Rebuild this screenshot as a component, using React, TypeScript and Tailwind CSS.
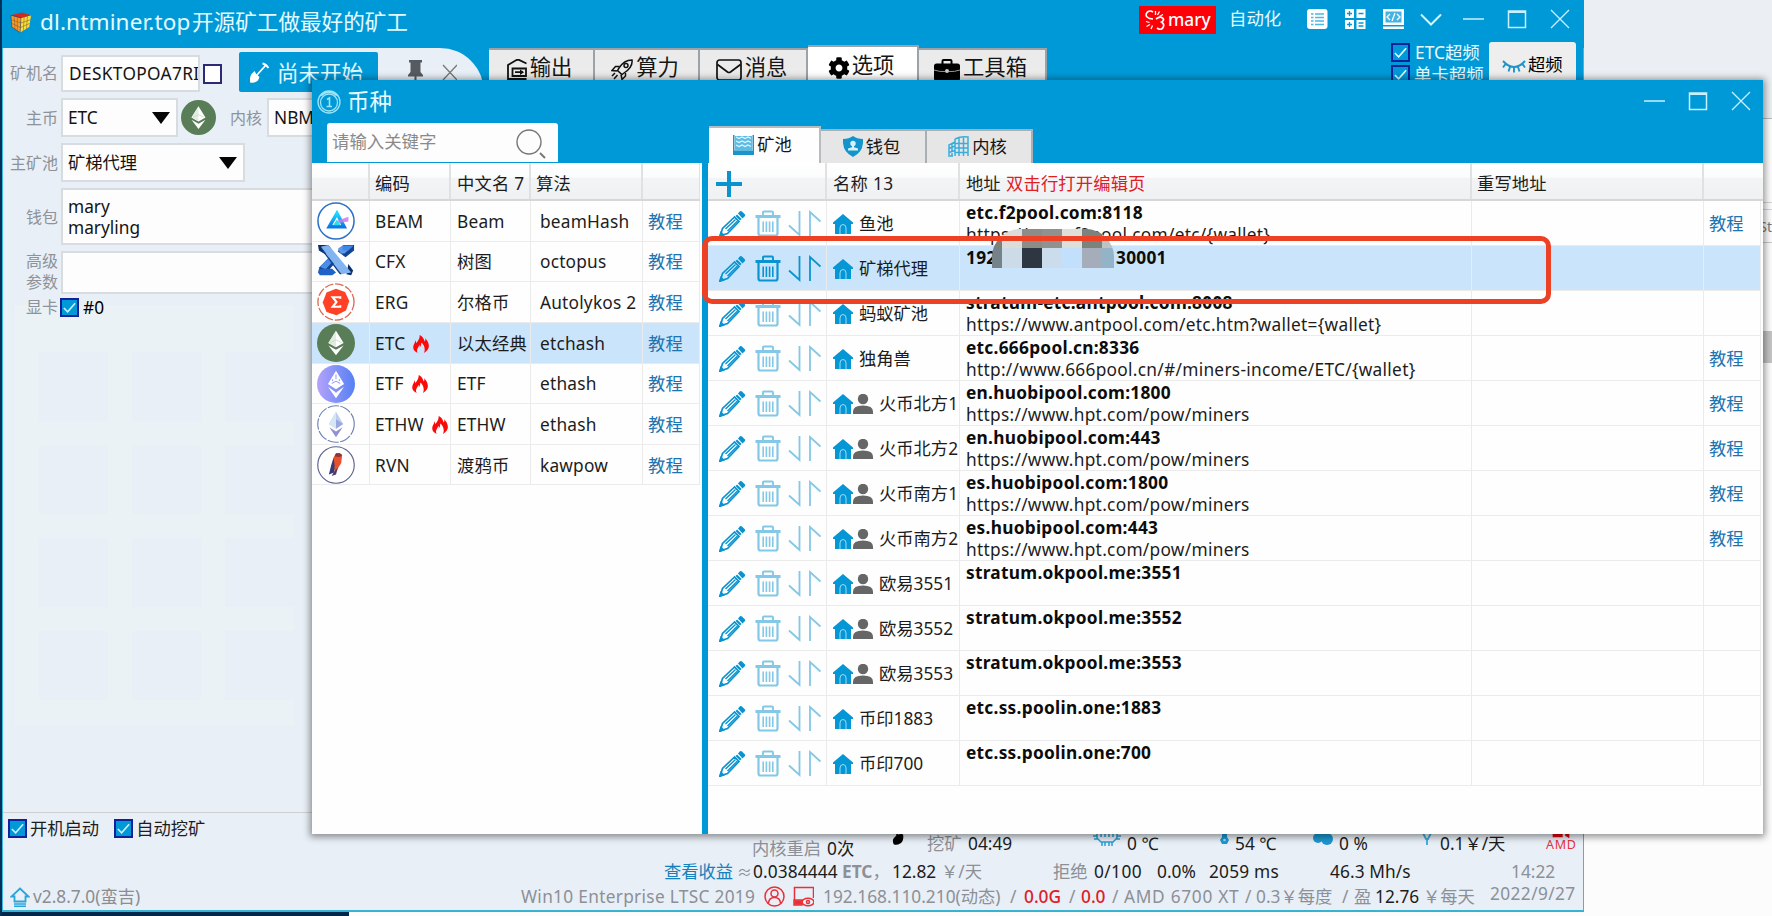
import type { ReactNode } from "react";
import { ImFire } from "react-icons/im";
import { FaCog } from "react-icons/fa";
import { clsx } from "clsx";

/* ---------- small icons ---------- */

const Check = ({ white = false }: { white?: boolean }) => (
  <span className="flex h-[19px] w-[19px] shrink-0 items-center justify-center border-2 border-[#10229a] bg-[#0099d8]">
    <svg viewBox="0 0 16 16" className="h-[15px] w-[15px]" fill="none" stroke={white ? "#e6fbff" : "#c9f2ff"} strokeWidth="1.7">
      <path d="M2 8.5 6 12.5 14 3.5" />
    </svg>
  </span>
);

const EthMark = () => (
  <>
    <path d="M20 7 28 20 20 24.5 12 20z" fill="#fff" />
    <path d="M20 7 20 24.5 12 20z" fill="#e3ece0" />
    <path d="M12 22.5 20 27 28 22.5 20 33z" fill="#fff" />
    <path d="M14 19.5 20 16.8 26 19.5" fill="none" stroke="#c5d6c2" strokeWidth=".8" />
  </>
);

const coins: Record<string, ReactNode> = {
  BEAM: (
    <>
      <defs>
        <linearGradient id="beam" x1="0" y1="0" x2="0" y2="1">
          <stop offset="0" stopColor="#20d8ff" />
          <stop offset="1" stopColor="#0878ea" />
        </linearGradient>
      </defs>
      <circle cx="20" cy="20" r="19" fill="#fff" stroke="#2a6fc8" strokeWidth="1.6" />
      <path d="M21 12 28.500 26H13z" fill="none" stroke="url(#beam)" strokeWidth="3.8" />
      <path d="M22 19.500 33 15.500v5L23 22z" fill="#c77be8" opacity=".85" />
      <path d="M17 24.500 21 18.5 25 24.500z" fill="#2be0e6" />
    </>
  ),
  CFX: (
    <>
      <path d="M24 5 28 2H39V8L30 15 22 9z" fill="#12448f" />
      <path d="M22 6 27 3H38L29 11 25 11z" fill="#5c9ae8" />
      <path d="M27 3 38 3 33 8 27 8z" fill="#3f87ee" />
      <path d="M2 26 14 14 20 20 12 29H3z" fill="#12448f" />
      <path d="M3 25 13 15 17 19 9 28z" fill="#4b8ee8" />
      <path d="M2 27H16L20 31 16 34H3L1 31z" fill="#1d62c9" />
      <path d="M1 2H12L15 6 9 12 2 8z" fill="#0c2f6a" />
      <path d="M33 22 38 29 36 34 31 33z" fill="#0c2f6a" />
      <path d="M4 4 12 2 36 31 26 33z" fill="#82b4f2" />
      <path d="M4 4 6 9 24 33 26 33z" fill="#12448f" />
    </>
  ),
  ERG: (
    <>
      <circle cx="20" cy="20" r="19" fill="#fff" stroke="#dd6a55" strokeWidth="1.4" strokeDasharray="9 2" />
      <path d="M20 6 29.500 9.500 34 19 30.500 29 20.500 34 10 30.500 6 20.500 10 10z" fill="#ff4226" />
      <path d="M24.500 16.500V15H16.500L20.500 20 16.500 25H24.500V23.500" fill="none" stroke="#fff" strokeWidth="2.200" />
    </>
  ),
  ETC: (
    <>
      <circle cx="20" cy="20" r="20" fill="#597d57" />
      <EthMark />
    </>
  ),
  ETF: (
    <>
      <defs>
        <linearGradient id="etf" x1="0" y1="0" x2="1" y2="0">
          <stop offset="0" stopColor="#b4a3fb" />
          <stop offset="1" stopColor="#5580f4" />
        </linearGradient>
      </defs>
      <circle cx="20" cy="20" r="20" fill="url(#etf)" />
      <path d="M20 6 28.500 20 20 25.500 11.500 20z" fill="#fff" />
      <path d="M11.500 23 20 29 28.500 23 20 35z" fill="#fff" />
      <path d="M20 10v5M15.500 19.500 20 17l4.500 2.500M20 26v3M16.500 15v2M23.500 15v2" fill="none" stroke="#8f92f8" strokeWidth="1" />
    </>
  ),
  ETHW: (
    <>
      <circle cx="20" cy="20" r="19.200" fill="#fff" stroke="#6c83b4" strokeWidth="1.200" strokeDasharray="12 1.500" />
      <path d="M20 7 27.500 20 20 25 12.500 20z" fill="#bccdf0" />
      <path d="M20 7 20 25 12.500 20z" fill="#d6e7f4" />
      <path d="M20 15 27.500 20 20 25z" fill="#9aa7e2" />
      <path d="M13 23.500 20 28 27 23.500 20 34z" fill="#8f90d6" />
    </>
  ),
  RVN: (
    <>
      <circle cx="20" cy="20" r="19.200" fill="#fff" stroke="#5c6190" strokeWidth="1.200" />
      <path d="M17.500 12 20 7.500 24 7.500 26.500 9.500 25.500 18 20.500 26 15.500 25z" fill="#e8512c" />
      <path d="M17.500 12 15 20 12.500 30 18 28 18.500 20z" fill="#363a78" />
      <path d="M18.500 26 15.500 31.500 20 30 22 23z" fill="#4f3a6a" />
      <path d="M20 7.500 24 7.500 26.500 9.500 24 11.500 18.500 11z" fill="#8c3340" />
    </>
  ),
};

const Coin = ({ name }: { name: string }) => (
  <svg viewBox="0 0 40 40" className="h-[38px] w-[38px]">{coins[name]}</svg>
);

const Pencil = () => (
  <svg viewBox="0 0 27 27" className="h-[27px] w-[27px]" fill="none" stroke="#0a93cf" strokeWidth="1.700">
    <path d="M19 3.500 21 1.300Q22 .6 23 1.500L26 4.500Q26.500 5.500 25.700 6.300L23.500 8.500z" fill="#0a93cf" stroke="none" />
    <path d="M17.300 5.200 21.800 9.700" strokeWidth="2.200" />
    <path d="M15.500 7 3.500 18.500 1.300 25.700 8.500 23.500 20 11.500z" />
    <path d="M6.500 19 16.500 9.500M8.500 21 18.500 11" strokeWidth="1.400" />
    <path d="M.8 26.300 2 22.500 4.500 25z" fill="#0a93cf" />
  </svg>
);

const Trash = () => (
  <svg viewBox="0 0 26 27" className="h-[27px] w-[26px]" fill="none" stroke="#0a93cf">
    <path d="M.5 6.500H25.500" strokeWidth="3" />
    <path d="M8 5V2.500Q8 1.500 9 1.500H17Q18 1.500 18 2.500V5" strokeWidth="1.900" />
    <path d="M3.500 8V23.500Q3.500 25.500 5.500 25.500H20.500Q22.500 25.500 22.500 23.500V8" strokeWidth="2.200" />
    <path d="M8.200 11.500V22M11.400 11.500V22M14.600 11.500V22M17.800 11.500V22" strokeWidth="1.600" />
  </svg>
);

const Arrows = () => (
  <svg viewBox="0 0 33 27" className="h-[27px] w-[33px]" fill="none" stroke="#0a93cf" strokeWidth="1.800">
    <path d="M11.500 1V25L1 15.500" />
    <path d="M22 26V2L32.500 11.500" />
  </svg>
);

const House = () => (
  <svg viewBox="0 0 20 20" className="h-[20px] w-[20px]">
    <path d="M10 0 20 8.500V10H18V20H2V10H0V8.500z" fill="#0596d5" />
    <path d="M7 20V14Q7 10.500 10 10.500T13 14V20" fill="none" stroke="#9bdcf5" strokeWidth="1" />
  </svg>
);

const User = () => (
  <svg viewBox="0 0 20 20" className="h-[20px] w-[20px]" fill="#666">
    <circle cx="10" cy="5" r="5.200" />
    <path d="M0 20V17.500Q0 11.500 10 11.500T20 17.500V20z" />
  </svg>
);

const Cube = () => (
  <svg viewBox="0 0 24 24" className="h-[23px] w-[22px]">
    <path d="M1 4 12 7 11 23 2 17z" fill="#f59a2c" />
    <path d="M12 7 23 4 21 17 11 23z" fill="#f7e03a" />
    <path d="M1 4 13 1 23 4 12 7z" fill="#d42a1c" />
    <path d="M4.500 5 5.500 19M8 6 8 21M1.500 9 12 12.500M2 13 11.500 17.500M15.500 6 14.500 21M19 5 18 19M12 12.500 22.500 9M11.500 17.500 21.500 13" stroke="#8a5a28" strokeWidth=".6" />
    <path d="M1 4 12 7 11 23 2 17z" fill="none" stroke="#3c2c50" strokeWidth=".6" />
  </svg>
);

const WindowButtons = () => (
  <svg viewBox="0 0 107 20" className="h-[20px] w-[107px]" fill="none" stroke="#c8f1fd" strokeWidth="1.500">
    <path d="M0 10H21" />
    <path d="M45.500 2H62.500V18.500H45.500z" />
    <path d="M45 3H63" strokeWidth="2" />
    <path d="M88 1 106 19M106 1 88 19" strokeWidth="1.300" />
  </svg>
);

/* ---------- data ---------- */

const coinRows = [
  { code: "BEAM", name: "Beam", algo: "beamHash" },
  { code: "CFX", name: "树图", algo: "octopus" },
  { code: "ERG", name: "尔格币", algo: "Autolykos 2" },
  { code: "ETC", name: "以太经典", algo: "etchash", hot: true, active: true },
  { code: "ETF", name: "ETF", algo: "ethash", hot: true },
  { code: "ETHW", name: "ETHW", algo: "ethash", hot: true },
  { code: "RVN", name: "渡鸦币", algo: "kawpow" },
];

const poolRows = [
  { name: "鱼池", host: "etc.f2pool.com:8118", url: "https://www.f2pool.com/etc/{wallet}", help: true },
  { name: "矿梯代理", host: "192", port: "30001", active: true },
  { name: "蚂蚁矿池", host: "stratum-etc.antpool.com:8008", url: "https://www.antpool.com/etc.htm?wallet={wallet}" },
  { name: "独角兽", host: "etc.666pool.cn:8336", url: "http://www.666pool.cn/#/miners-income/ETC/{wallet}", help: true },
  { name: "火币北方1", user: true, host: "en.huobipool.com:1800", url: "https://www.hpt.com/pow/miners", help: true },
  { name: "火币北方2", user: true, host: "en.huobipool.com:443", url: "https://www.hpt.com/pow/miners", help: true },
  { name: "火币南方1", user: true, host: "es.huobipool.com:1800", url: "https://www.hpt.com/pow/miners", help: true },
  { name: "火币南方2", user: true, host: "es.huobipool.com:443", url: "https://www.hpt.com/pow/miners", help: true },
  { name: "欧易3551", user: true, host: "stratum.okpool.me:3551" },
  { name: "欧易3552", user: true, host: "stratum.okpool.me:3552" },
  { name: "欧易3553", user: true, host: "stratum.okpool.me:3553" },
  { name: "币印1883", host: "etc.ss.poolin.one:1883" },
  { name: "币印700", host: "etc.ss.poolin.one:700" },
];

const headGradient = "bg-[linear-gradient(#ffffff_0%,#fbfcfc_40%,#f3f4f6_41%,#eff1f3_100%)]";

/* ---------- main window ---------- */

const TopBar = () => (
  <div className="flex h-[42px] items-start text-[#e6fbff]">
    <div className="flex items-center pt-[7px] pl-[8px]">
      <Cube />
      <span className="ml-[8px] w-[152px] text-[22.500px] leading-[30px] whitespace-nowrap tracking-[0.15px]">dl.ntminer.top</span>
      <span className="text-[21.600px] leading-[30px]">开源矿工做最好的矿工</span>
    </div>
    <div className="ml-auto flex items-center">
      <div className="mt-[6px] mr-[13px] flex h-[28px] w-[77px] items-center bg-[#fb0007] pl-[6px]">
        <svg viewBox="0 0 20 20" className="h-[20px] w-[20px]" fill="none" stroke="#fff" strokeWidth="1.700">
          <path d="M8 9Q4 9 2 7T2.500 2Q5 0 8 2" />
          <path d="M11 9Q15 6 17.500 8T16.500 12Q20 14 18 17.500T12 18" />
          <path d="M10.500 1v4M14.500 1.500l-2 3.500M18 4.500l-3.500 2M1 11.500l3.500 1M1.500 16.500l3.500-2M6 19l1.500-3.500" strokeWidth="1.300" />
        </svg>
        <span className="ml-[3px] text-[17.300px] leading-[24px] font-medium text-white">mary</span>
      </div>
      <span className="mt-[2px] w-[78px] text-[17.400px] leading-[24px]">自动化</span>
      <svg viewBox="0 0 97 20" className="mt-[4px] h-[20px] w-[97px]" fill="#fff">
        <rect x="0" y="0" width="20.500" height="20" rx="3" />
        <path d="M4 5h2.500M8 5h9M4 8.500h2.500M8 8.500h9M4 12h2.500M8 12h9M4 15.500h2.500M8 15.500h9" stroke="#4bb8e4" strokeWidth="1.300" />
        <path d="M38 0h9v9h-9zM49.500 0h9v9h-9zM38 11h9v9h-9zM49.500 11h9v9h-9z" />
        <path d="M40 4.500h5M42.500 2v5M51.500 4.500h5M40 15.500h5M42.500 13v5M51.500 14h5M51.500 17h5" stroke="#0099d8" strokeWidth="1.300" />
        <path d="M76 0h21v16H76zM76 17.500h21V20H76z" />
        <path d="M78.500 2.500h16v11h-16z" fill="#42b3e2" />
        <path d="M83 5l-3 3 3 3M90 5l3 3-3 3M88 4l-3 8" fill="none" stroke="#fff" strokeWidth="1.300" />
      </svg>
      <svg viewBox="0 0 22 12" className="mt-[4px] mr-[21px] ml-[16px] h-[13px] w-[22px]" fill="none" stroke="#d5f6ff" strokeWidth="2">
        <path d="M1 1 11 11 21 1" />
      </svg>
      <div className="mt-[4px] mr-[14px]"><WindowButtons /></div>
    </div>
  </div>
);

const MainTab = ({ icon, label, width, active }: { icon: ReactNode; label: string; width: string; active?: boolean }) => (
  <div
    className={clsx(
      "flex shrink-0 justify-center border-t-2 border-r-2 border-[#9ba3a8] pr-[3px] text-[21.300px] leading-[26px] text-[#151515]",
      width,
      active ? "mt-[5px] h-[40px] bg-white pt-[5px]" : "mt-[8px] h-[40px] bg-[#ebebeb] pt-[4px]",
    )}
  >
    <span className="mt-[5px] flex h-[21px] items-center">{icon}</span>
    <span className={active ? "ml-[2px]" : "ml-[3px]"}>{label}</span>
  </div>
);

const MainTabs = () => (
  <div className="flex h-[46px]">
    <MainTab width="w-[106px]" label="输出" icon={
      <svg viewBox="0 0 20 21" className="h-[21px] w-[20px]" fill="none" stroke="#111" strokeWidth="1.800">
        <path d="M19.500 4.500 12 .9Q10.500.5 9 1.200L1 6V20H19.500" />
        <path d="M5.500 9.500H19V17H5.500zM8 13.200H16" />
        <path d="M13 10.500 17 13.200 13 16z" fill="#111" stroke="none" />
      </svg>} />
    <MainTab width="w-[105px]" label="算力" icon={
      <svg viewBox="0 0 22 21" className="h-[21px] w-[22px]" fill="none" stroke="#111" strokeWidth="1.500">
        <path d="M8 9Q13 1 21 1Q22 8 13 14L11 15.500 6.500 11.500z" />
        <path d="M8.500 7.500H4.500L1 11.500 6 12M14.500 14V17L11 20.500 10 15.500M4 14 1 17M6.500 16 3 20" />
        <circle cx="15" cy="6.500" r="2" />
      </svg>} />
    <MainTab width="w-[108px]" label="消息" icon={
      <svg viewBox="0 0 26 22" className="h-[22px] w-[26px]" fill="none" stroke="#111" strokeWidth="1.700">
        <rect x="1" y="1" width="24" height="20" rx="2.500" />
        <path d="M1.500 5.500 11.500 13Q13 14 14.500 13L24.500 5.500" />
      </svg>} />
    <MainTab width="w-[111px]" label="选项" active icon={<FaCog className="h-[22px] w-[22px] text-black" />} />
    <MainTab width="w-[128px]" label="工具箱" icon={
      <svg viewBox="0 0 26 22" className="h-[22px] w-[26px]">
        <path d="M8.500 5V2Q8.500 1 9.500 1H16.500Q17.500 1 17.500 2V5" fill="none" stroke="#000" strokeWidth="2" />
        <rect x="0" y="4.500" width="26" height="17.500" rx="2.500" />
        <path d="M0 11Q6 13 11 12.500M15 12.500Q20 13 26 11" stroke="#999" fill="none" />
        <circle cx="13" cy="12" r="2" fill="#ccc" />
      </svg>} />
  </div>
);

const Label = ({ children, pad = "pt-[8px]" }: { children: ReactNode; pad?: string }) => (
  <span className={clsx("w-[55px] shrink-0 text-right text-[16px] leading-[21px] text-[#8d9399]", pad)}>{children}</span>
);

const Field = ({ className, children }: { className: string; children?: ReactNode }) => (
  <div className={clsx("ml-[3px] flex shrink-0 items-center overflow-hidden border-2 border-[#d9dcdf] bg-[#fdfdfd] pr-[6px] pl-[5px] text-[17.300px] leading-[21px] whitespace-nowrap text-[#141414]", className)}>
    {children}
  </div>
);

const Caret = () => (
  <svg viewBox="0 0 18 12" className="ml-auto h-[12px] w-[18px]"><path d="M0 0H18L9 12z" fill="#050505" /></svg>
);

const Sidebar = () => (
  <div className="relative flex w-[482px] shrink-0 flex-col overflow-hidden rounded-tr-[44px] border-l border-[#3cb9dc] bg-[#e8eff6]">
    {/* faint tiled watermark */}
    <div className="absolute top-[257px] left-[12px] grid h-[420px] w-[279px] grid-cols-3 content-start gap-[24px] bg-[#eaf2f6] pt-[47px] pl-[24px]">
      {Array.from({ length: 12 }, (_, i) => <div key={i} className="h-[69px] bg-[#e8eff6]" />)}
    </div>
    <div className="relative flex flex-col gap-[6px] pt-[7px]">
      <div className="flex h-[37px]">
        <Label>矿机名</Label>
        <Field className="w-[139px]"><span className="ml-[1px] tracking-[0.35px]">DESKTOPOA7RI</span></Field>
        <span className="mt-[9px] ml-[3px] h-[20px] w-[19px] shrink-0 border-2 border-[#2c2a78] bg-white" />
        <div className="-mt-[3px] ml-[17px] flex h-[40px] w-[139px] shrink-0 items-center rounded-[2px] bg-[#0099d8] pt-[1px] pl-[11px] text-[#e6fbff]">
          <svg viewBox="0 0 20 21" className="h-[21px] w-[20px]" fill="#fff">
            <path d="M1.500 12 4.500 9 6.500 12.500 9.500 15 8 18.500Q5 21.500 0 20.500Q-.5 15 1.500 12z" />
            <path d="M6.500 13.500 15.500 3.500M12.500 1.500Q16 2 18.500 6" stroke="#fff" strokeWidth="1.800" fill="none" />
          </svg>
          <span className="ml-[7px] text-[21.500px] leading-[26px]">尚未开始</span>
        </div>
        <svg viewBox="0 0 50 22" className="mt-[5px] ml-[29px] h-[22px] w-[50px] shrink-0">
          <path d="M2 0H15V2.500H13.500V12L16 15V16.500H1V15L3.500 12V2.500H2zM7.500 16H9.500V22H7.500z" fill="#555b60" />
          <path d="M36 5 50 20M50 5 36 20" stroke="#777" strokeWidth="1.300" />
        </svg>
      </div>
      <div className="flex h-[39px]">
        <Label pad="pt-[10px]">主币</Label>
        <Field className="w-[117px]">ETC<Caret /></Field>
        <span className="mt-[2px] ml-[3px] shrink-0"><svg viewBox="0 0 40 40" className="h-[35px] w-[35px]">{coins.ETC}</svg></span>
        <span className="mt-[10px] ml-[14px] w-[34px] shrink-0 text-[16px] leading-[21px] text-[#8d9399]">内核</span>
        <Field className="-ml-[1px] w-[200px]">NBMiner</Field>
      </div>
      <div className="flex h-[39px]">
        <Label pad="pt-[10px]">主矿池</Label>
        <Field className="w-[184px]">矿梯代理<Caret /></Field>
      </div>
      <div className="flex h-[57px]">
        <Label pad="pt-[19px]">钱包</Label>
        <Field className="w-[420px]"><span className="pt-[1px]">mary<br />maryling</span></Field>
      </div>
      <div className="flex h-[43px]">
        <Label pad="pt-0">高级<br />参数</Label>
        <Field className="w-[420px]" />
      </div>
      <div className="-mt-[3px] flex h-[20px]">
        <Label pad="pt-0">显卡</Label>
        <span className="mr-[4px] ml-[2px] pt-[1px]"><Check /></span>
        <span className="pt-[1px] text-[17.300px] leading-[20px]">#0</span>
      </div>
    </div>
    <div className="mt-auto h-[98px] border-t border-[#cfcfcf] pt-[6px] pl-[5px]">
      <div className="flex text-[17.300px] leading-[19px] text-[#1d1d1d]">
        <Check /><span className="mr-[15px] ml-[3px]">开机启动</span>
        <Check /><span className="ml-[3px]">自动挖矿</span>
      </div>
      <div className="mt-[48px] flex items-center text-[17.300px] leading-[22px] text-[#8a8d92]">
        <svg viewBox="0 0 20 20" className="mr-[3px] ml-[2px] h-[20px] w-[20px]" fill="none" stroke="#2aa5dc" strokeWidth="1.800">
          <path d="M10 1.500 18.500 9.500H15.500V14.500H4.500V9.500H1.500z" />
          <path d="M4 17H16M4 19.300H16" strokeWidth="1.500" />
        </svg>
        <span>v2.8.7.0(蛮吉)</span>
      </div>
    </div>
  </div>
);

const Cell = ({ w, className, children }: { w: string; className?: string; children?: ReactNode }) => (
  <span className={clsx("shrink-0 whitespace-nowrap", w, className)}>{children}</span>
);

const StatusBar = () => (
  <div className="mt-auto h-[78px] w-full bg-[#e8eff6] pt-[1px] text-[17.300px] leading-[22px] text-[#1c1c1c]">
    <div className="flex h-[27px] pl-[268px]">
      <Cell w="w-[75px]" className="pt-[5px] text-[#8d9096]">内核重启</Cell>
      <Cell w="w-[65px]" className="pt-[5px]">0次</Cell>
      <Cell w="w-[35px]">
        <svg viewBox="0 0 12 14" className="h-[12px] w-[12px]"><path d="M1 6 4 3 4 0 7 2 9 0 12 2Q13 9 9 12 4 15 1 13-1 9 1 6z" /></svg>
      </Cell>
      <Cell w="w-[41px]" className="text-[#8d9096]">挖矿</Cell>
      <Cell w="w-[125px]">04:49</Cell>
      <Cell w="w-[34px]">
        <svg viewBox="0 0 28 14" className="h-[14px] w-[28px]" fill="none" stroke="#2a9fd2" strokeWidth="1.500">
          <path d="M4 0V5L8 9H20L24 5V0M0 3H4M24 3H28M1 6H5M23 6H27M9 9V13M12 9V13M16 9V13M19 9V13M8 1V4M12 1V4M16 1V4M20 1V4" />
        </svg>
      </Cell>
      <Cell w="w-[93px]">0 ℃</Cell>
      <Cell w="w-[15px]">
        <svg viewBox="0 0 9 12" className="h-[12px] w-[9px]"><path d="M2 0H7V4L9 7 7 11H2L0 7 2 4z" fill="#1b98d2" /><circle cx="4.500" cy="7" r="1.300" fill="#9bdcf5" /></svg>
      </Cell>
      <Cell w="w-[78px]">54 ℃</Cell>
      <Cell w="w-[26px]">
        <svg viewBox="0 0 20 12" className="h-[12px] w-[20px]" fill="#1b98d2"><circle cx="5" cy="5" r="5" /><circle cx="14" cy="6" r="6" /><circle cx="10" cy="2" r="3" /></svg>
      </Cell>
      <Cell w="w-[83px]">0 %</Cell>
      <Cell w="w-[18px]">
        <svg viewBox="0 0 10 12" className="h-[12px] w-[10px]" fill="none" stroke="#3aa9dc" strokeWidth="1.800"><path d="M1 0 4 6H6L9 0M5 6V12" /></svg>
      </Cell>
      <Cell w="w-[106px]">0.1￥/天</Cell>
      <Cell w="w-[32px]" className="relative">
        <svg viewBox="0 0 20 6" className="absolute top-[1px] left-[5px] h-[5px] w-[20px]"><path d="M0 0H12V4H0zM15 0H20V5L15 2z" fill="#e8000c" /></svg>
        <span className="block pt-[5px] text-[12.500px] leading-[14px] tracking-[0.7px] text-[#e8303a]">AMD</span>
      </Cell>
    </div>
    <div className="flex pt-[1px] pl-[180px]">
      <Cell w="w-[75px]" className="text-[#1580bb]">查看收益</Cell>
      <Cell w="w-[14px]" className="-ml-[2px] mr-[2px] text-[15px] text-[#8d9096]">≈</Cell>
      <Cell w="w-[89px]" className="tracking-[0.1px]">0.0384444</Cell>
      <Cell w="w-[50px]" className="font-bold text-[#8d9096]">ETC<span className="font-normal">，</span></Cell>
      <Cell w="w-[49px]">12.82</Cell>
      <Cell w="w-[112px]" className="text-[#8d9096]">￥/天</Cell>
      <Cell w="w-[41px]" className="text-[#8d9096]">拒绝</Cell>
      <Cell w="w-[63px]" className="tracking-[0.4px]">0/100</Cell>
      <Cell w="w-[52px]">0.0%</Cell>
      <Cell w="w-[121px]" className="tracking-[0.2px]">2059 ms</Cell>
      <Cell w="w-[181px]" className="tracking-[0.1px]">46.3 Mh/s</Cell>
      <Cell w="w-[50px]" className="text-[#8d9096]">14:22</Cell>
    </div>
    <div className="flex pt-[3px] pl-[37px] text-[#8d9096]">
      <Cell w="w-[243px]" className="tracking-[0.3px]">Win10 Enterprise LTSC 2019</Cell>
      <Cell w="w-[59px]">
        <svg viewBox="0 0 50 21" className="h-[21px] w-[50px]" fill="none" stroke="#e8303a" strokeWidth="1.500">
          <circle cx="10.500" cy="10.500" r="9.500" />
          <circle cx="10.500" cy="7.500" r="3.500" />
          <path d="M4.500 17Q5 11.500 10.500 11.500T16.500 17" />
          <path d="M30.500 14V1.500H49.500V12M30 14H38V19H30z" />
          <path d="M31 15H37V18H31z" fill="#e8303a" />
          <ellipse cx="44" cy="16" rx="6" ry="3.800" /><circle cx="44" cy="16" r="1.500" />
        </svg>
      </Cell>
      <Cell w="w-[187px]">192.168.110.210(动态)</Cell>
      <Cell w="w-[14px]">/</Cell>
      <Cell w="w-[45px]" className="font-medium text-[#dd2027]">0.0G</Cell>
      <Cell w="w-[12px]">/</Cell>
      <Cell w="w-[31px]" className="font-medium text-[#dd2027]">0.0</Cell>
      <Cell w="w-[12px]">/</Cell>
      <Cell w="w-[121px]" className="tracking-[0.7px]">AMD 6700 XT</Cell>
      <Cell w="w-[11px]">/</Cell>
      <Cell w="w-[86px]">0.3￥每度</Cell>
      <Cell w="w-[12px]">/</Cell>
      <Cell w="w-[21px]">盈</Cell>
      <Cell w="w-[48px]" className="text-[#1c1c1c]">12.76</Cell>
      <Cell w="w-[67px]">￥每天</Cell>
      <Cell w="w-[90px]" className="-mt-[3px] tracking-[0.4px]">2022/9/27</Cell>
    </div>
  </div>
);

const MainWindow = () => (
  <div className="absolute top-0 left-[2px] flex h-[912px] w-[1582px] flex-col border-b-2 border-[#37b3d2] bg-[#0099d8]">
    <TopBar />
    <div className="-mt-[2px] flex h-[46px]">
      <div className="w-[487px]" />
      <MainTabs />
      <div className="ml-auto flex">
        <div className="flex w-[98px] flex-col gap-[3px] pt-[3px] text-[17.400px] leading-[19px] text-[#e6fbff]">
          <span className="flex gap-[5px] whitespace-nowrap"><Check white />ETC超频</span>
          <span className="flex gap-[4px] whitespace-nowrap"><Check white />单卡超频</span>
        </div>
        <div className="mt-[2px] mr-[8px] flex h-[44px] w-[87px] items-center rounded-[3px] bg-[#eeeeee] pt-[2px] pl-[13px] text-[17.300px] text-black">
          <svg viewBox="0 0 24 13" className="mt-[3px] mr-[2px] h-[13px] w-[24px]" fill="none" stroke="#1f93c8" strokeWidth="1.900">
            <path d="M1 1Q12 13 23 1M3.500 4 1 7.500M8 7 6.500 11.500M12 7.500V12.500M16 7 17.500 11.500M20.500 4 23 7.500" />
          </svg>
          超频
        </div>
      </div>
    </div>
    <div className="relative -mt-[38px] flex min-h-0 flex-1">
      <Sidebar />
      <div className="flex flex-1 flex-col border-r border-[#3cb9dc]">
        <StatusBar />
      </div>
    </div>
  </div>
);

/* ---------- coin dialog ---------- */

const CoinTable = () => (
  <div className="w-[390px] shrink-0 bg-[#fefefe] tracking-[0.2px]">
    <div className={clsx("flex h-[38px] w-[388px] items-center border-b-2 border-[#d5d7d9] text-[17.300px] leading-[22px] text-[#1c1c1c]", headGradient)}>
      <div className="h-full w-[58px] border-r-2 border-[#dfe1e3]" />
      <div className="flex h-full w-[81px] items-center border-r-2 border-[#dfe1e3] pt-[5px] pl-[5px]">编码</div>
      <div className="flex h-full w-[80px] items-center border-r-2 border-[#dfe1e3] pt-[5px] pl-[6px]">中文名&nbsp;7</div>
      <div className="flex h-full w-[112px] items-center border-r-2 border-[#dfe1e3] pt-[5px] pl-[5px]">算法</div>
      <div className="h-full w-[57px] border-r border-[#dfe1e3]" />
    </div>
    {coinRows.map((r) => (
      <div key={r.code} className={clsx("flex h-[40.650px] w-[388px] text-[17.300px] leading-[22px] text-[#1c1c1c]", r.active && "bg-[#cae5fb]")}>
        <div className="w-[58px] border-r border-b border-[#ebebeb] pt-[1px] pl-[5px]"><Coin name={r.code} /></div>
        <div className="flex w-[81px] items-center border-r border-b border-[#ebebeb] pt-[2px] pl-[5px] whitespace-nowrap">
          {r.code}
          {r.hot && <ImFire className="ml-[7px] h-[18px] w-[18px] shrink-0 text-[#fb0a0a]" />}
        </div>
        <div className="flex w-[80px] items-center border-r border-b border-[#ebebeb] pt-[2px] pl-[6px] whitespace-nowrap">{r.name}</div>
        <div className="flex w-[112px] items-center border-r border-b border-[#ebebeb] pt-[2px] pl-[9px] whitespace-nowrap">{r.algo}</div>
        <div className="flex w-[57px] items-center border-r border-b border-[#ebebeb] pt-[2px] pl-[5px] text-[#1c74b0]">教程</div>
      </div>
    ))}
  </div>
);

const PoolTable = () => (
  <div className="w-[1055px] shrink-0 bg-[#fefefe]">
    <div className={clsx("flex h-[38px] border-b-2 border-[#d5d7d9] text-[17.300px] leading-[22px] text-[#1c1c1c]", headGradient)}>
      <div className="flex w-[119px] items-center border-r-2 border-[#dfe1e3] pt-[5px] pl-[8px]">
        <svg viewBox="0 0 26 26" className="h-[26px] w-[26px]"><path d="M13 0V26M0 13H26" stroke="#0a93cf" strokeWidth="4" /></svg>
      </div>
      <div className="flex w-[133px] items-center border-r-2 border-[#dfe1e3] pt-[5px] pl-[6px] tracking-[0.3px]">名称&nbsp;13</div>
      <div className="flex w-[512px] items-center border-r-2 border-[#dfe1e3] pt-[5px] pl-[6px]">地址&nbsp;<span className="ml-[1px] tracking-[0.15px] text-[#e0201f]">双击行打开编辑页</span></div>
      <div className="flex w-[232px] items-center border-r-2 border-[#dfe1e3] pt-[5px] pl-[5px] tracking-[0.15px]">重写地址</div>
    </div>
    {poolRows.map((r) => (
      <div key={r.name} className={clsx("flex h-[45px] w-[1053px] text-[17.300px] leading-[22px] text-[#1c1c1c]", r.active && "bg-[#cae5fb]")}>
        <div className="flex w-[119px] items-center gap-[9px] border-r border-b border-[#ebebeb] pt-[1px] pl-[11px]">
          <Pencil />
          <span className={clsx("flex gap-[7px]", !r.active && "opacity-50")}><Trash /><Arrows /></span>
        </div>
        <div className="flex w-[133px] items-center border-r border-b border-[#ebebeb] pt-[2px] pl-[6px] whitespace-nowrap">
          <House />
          {r.user && <User />}
          <span className="ml-[6px]">{r.name}</span>
        </div>
        <div className="w-[512px] border-r border-b border-[#ebebeb] pt-[1px] pl-[6px] whitespace-nowrap">
          <div className="flex font-bold tracking-[0.27px] text-[#0c0c0c]">
            <span className={clsx(r.port && "w-[150px]")}>{r.host}</span>{r.port}
          </div>
          <div className="tracking-[0.29px]">{r.url}</div>
        </div>
        <div className="w-[232px] border-r border-b border-[#ebebeb]" />
        <div className="flex flex-1 items-center border-r border-b border-[#ebebeb] pt-[1px] pl-[5px] text-[#1c74b0]">{r.help && "教程"}</div>
      </div>
    ))}
  </div>
);

const DialogTab = ({ icon, label, active, width }: { icon: ReactNode; label: string; active?: boolean; width: string }) => (
  <div className={clsx("flex items-center justify-center border-t-2 border-r-2 pr-[3px] text-[17.300px] text-[#161616]", width, active ? "h-[37px] border-[#b6bcc0] bg-[#fefefe] pb-[2px]" : "h-[34px] border-[#a9afb3] bg-[#e6e6e6] pb-[1px]")}>
    {icon}
    <span className="ml-[3px]">{label}</span>
  </div>
);

const mosaicTop = ["bg-[#7f8079]", "bg-[#dcdcd8]", "bg-[#8c8d88]", "bg-[#8f928e]", "bg-[#dfdfda]", "bg-[#7c837c]", "bg-[#bfc3c2]"];
const mosaicBottom = ["bg-[#75828a]", "bg-[#cddae8]", "bg-[#2d3641]", "bg-[#cbdcec]", "bg-[#c2e0fc]", "bg-[#a6adba]", "bg-[#93b3c8]"];
const mosaicWidth = ["w-[10px]", "w-[20px]", "w-[20px]", "w-[20px]", "w-[20px]", "w-[20px]", "w-[12px]"];

const Dialog = () => (
  <div className="absolute top-[80px] left-[312px] flex h-[754px] w-[1451px] flex-col bg-[#0099d8] shadow-[0_1px_7px_2px_rgba(0,0,0,0.42)]">
    <div className="flex h-[43px] items-center pr-[12px] pl-[5px] text-[#e6fbff]">
      <svg viewBox="0 0 24 24" className="h-[24px] w-[24px]" fill="none" stroke="#9ce4f8" strokeWidth="1.300">
        <circle cx="12" cy="12" r="11" />
        <circle cx="12" cy="12.500" r="8.500" />
        <path d="M10 9.500 12.500 8V16.500M9.500 16.500H15" strokeWidth="1.600" />
        <path d="M4 5.500Q12-1.500 20 5.500" strokeWidth="2" />
      </svg>
      <span className="ml-[6px] pt-[1px] text-[22.400px] leading-[28px]">币种</span>
      <div className="-mt-[2px] ml-auto"><WindowButtons /></div>
    </div>
    <div className="flex h-[40px] items-start pl-[15px]">
      <div className="flex h-[39px] w-[231px] items-center rounded-t-[3px] bg-[#fdfdfd] pb-[2px] pl-[5px] text-[17.400px] text-[#8a8a8a]">
        请输入关键字
        <svg viewBox="0 0 30 30" className="mt-[4px] mr-[12px] ml-auto h-[30px] w-[30px]" fill="none" stroke="#777" strokeWidth="1.400">
          <circle cx="13" cy="13" r="12" />
          <path d="M24 24 29 29" strokeWidth="2" />
        </svg>
      </div>
      <div className="ml-[151px] flex h-[40px] items-end">
        <DialogTab active width="w-[112px]" label="矿池" icon={
          <svg viewBox="0 0 21 20" className="h-[20px] w-[21px]">
            <path d="M0 0H1.500V16H19.500V0H21V20H0z" fill="#1b93cb" />
            <rect x="2" y="1" width="17" height="14.500" fill="#5dbce4" />
            <path d="M3 2 6 3.500 9 2 12 3.500 15 2 18 3.500M3 6 6 7.500 9 6 12 7.500 15 6 18 7.500M3 10 6 11.500 9 10 12 11.500 15 10 18 11.500" fill="none" stroke="#e2f5fc" strokeWidth="1.200" />
            <path d="M1.500 15.500H19.500V20H1.500z" fill="#1b93cb" />
          </svg>} />
        <DialogTab width="w-[106px]" label="钱包" icon={
          <svg viewBox="0 0 20 21" className="h-[21px] w-[20px]"><path d="M10 0Q14 3 20 3Q21 16 10 21Q-1 16 0 3Q6 3 10 0z" fill="#1394cd" /><circle cx="10" cy="7.500" r="2.700" fill="#d6f1fb" /><path d="M5 14.500V12.500L9 11.300V9H11V11.300L15 12.500V14.500z" fill="#d6f1fb" /></svg>} />
        <DialogTab width="w-[106px]" label="内核" icon={
          <svg viewBox="0 0 21 21" className="h-[21px] w-[21px]" fill="none" stroke="#3aaedb" strokeWidth="1.500"><path d="M7 3Q13 0 20 1V20M7 3V20M11 2V20M15.500 1.500V20M7 7.500H20M7 12H20M7 16.500H20M7 6 1 9V20H5M1 12.500 7 10M1 16.500 7 14.500M4 8V20" /></svg>} />
      </div>
    </div>
    <div className="relative flex flex-1 justify-between">
      <CoinTable />
      <PoolTable />
    </div>
    {/* mosaic patch and highlight box drawn over the table */}
    <div className="absolute top-[149px] left-[680px] w-[122px] overflow-hidden rounded-t-[28px]">
      <div className="flex h-[19px]">{mosaicTop.map((c, i) => <div key={i} className={clsx(c, mosaicWidth[i])} />)}</div>
      <div className="flex h-[20px]">{mosaicBottom.map((c, i) => <div key={i} className={clsx(c, mosaicWidth[i])} />)}</div>
    </div>
    <div className="absolute top-[156px] left-[390px] h-[68px] w-[849px] rounded-[10px] border-[5px] border-[#ed4126]" />
  </div>
);

export default function App() {
  return (
    <div className="relative h-[916px] w-[1772px] overflow-hidden bg-[#fcfcfc] font-['Noto_Sans','Noto_Sans_CJK_SC',sans-serif]">
      {/* windows behind the application */}
      <div className="flex h-full flex-col items-end">
        <div className="h-[119px] w-full border-b border-[#b9bcc0] bg-[#ebeef2]" />
        <div className="mt-[83px] h-[8px] w-[9px] border-y border-[#d5d5d5]" />
        <div className="flex h-[33px] w-[16px] items-center justify-end border-b border-[#c9c9c9] text-[14px] text-[#777]">St</div>
        <div className="mt-[88px] h-[32px] w-[9px] bg-[#c4c4c4]" />
        <div className="mt-auto h-[4px] w-full bg-[linear-gradient(90deg,#03264b_349px,#fcfcfc_349px)]" />
      </div>
      <div className="absolute top-0 left-0 h-full w-[2px] bg-[#03315a]" />
      <MainWindow />
      <Dialog />
    </div>
  );
}
